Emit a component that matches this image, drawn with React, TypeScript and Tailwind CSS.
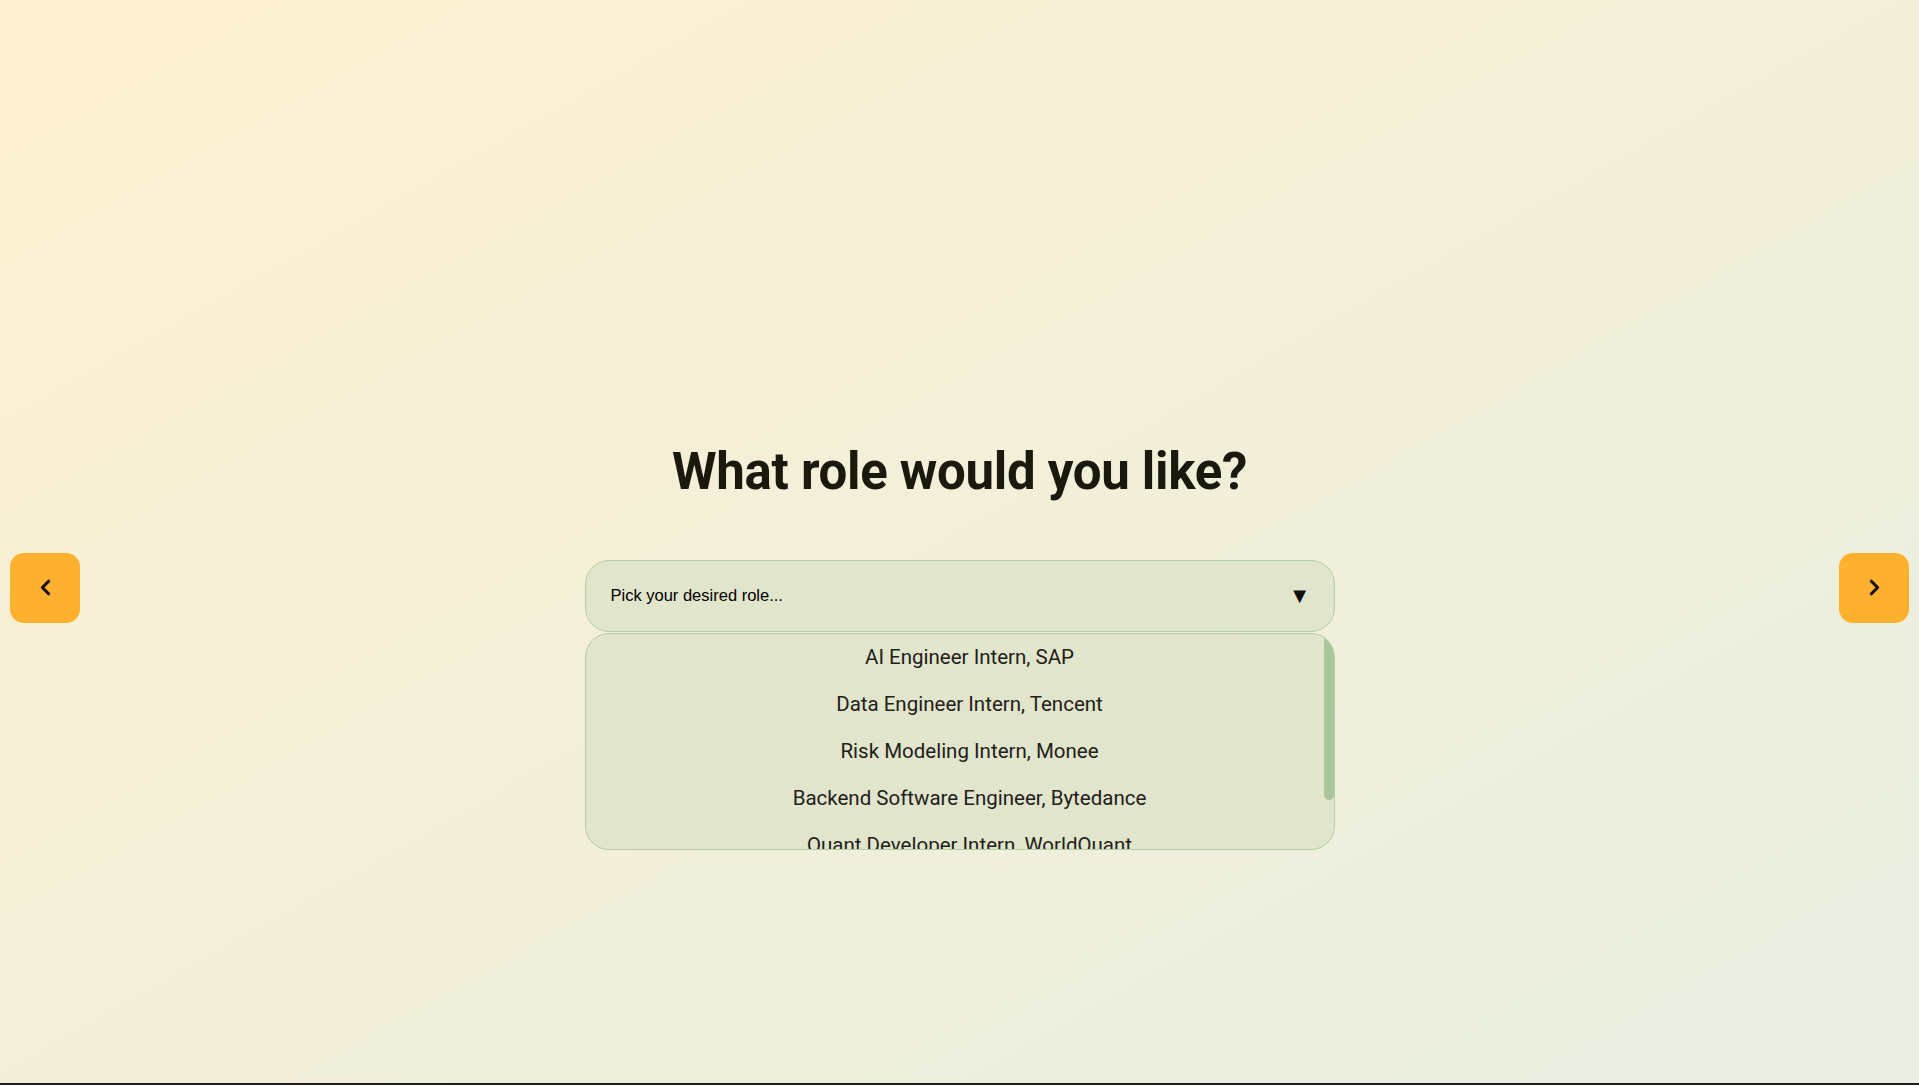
import { ChevronLeft, ChevronRight } from 'lucide-react';

const roles = [
  'AI Engineer Intern, SAP',
  'Data Engineer Intern, Tencent',
  'Risk Modeling Intern, Monee',
  'Backend Software Engineer, Bytedance',
  'Quant Developer Intern, WorldQuant',
  'Machine Learning Intern, Grab',
];

export default function App() {
  return (
    <main className="h-screen border-b-2 border-[#1b1b1b] bg-gradient-to-br from-[#fef0d0] to-[#e7eee1] flex flex-col justify-center gap-[63px] pb-[6px] font-['Roboto',sans-serif]">
      {/* TITLE */}
      <h1 className="text-center text-[51px] leading-none font-bold tracking-[-0.3px] text-[#1b180e]">
        What role would you like?
      </h1>

      {/* ROW: prev button, select, next button */}
      <div className="flex items-start justify-between px-[10px]">
        <button className="-mt-[7px] w-[70px] h-[70px] rounded-[14px] bg-[#fdb12f] flex items-center justify-center text-[#111]">
          <ChevronLeft size={25} strokeWidth={3} />
        </button>

        <div className="relative w-[750px]">
          <div className="h-[72px] rounded-[24px] border border-[#b3cea4] bg-[#e1e5cb] flex items-center justify-between pl-[25px] pr-[23px] font-['Liberation_Sans',Arial,sans-serif]">
            <span className="text-[16.5px] text-black">Pick your desired role...</span>
            <span className="text-[22px] leading-none text-[#111]">▼</span>
          </div>

          {/* DROPDOWN LIST */}
          <div className="absolute left-0 right-0 top-full mt-[1px] h-[217px] rounded-[24px] border border-[#b3cea4] bg-[#e1e5cb] overflow-hidden">
            <ul className="flex flex-col pl-[20px]">
              {roles.map((r) => (
                <li key={r} className="h-[47px] shrink-0 flex items-center justify-center text-[20.5px] text-[#22201a]">
                  {r}
                </li>
              ))}
            </ul>
            <div className="absolute right-0 top-[1px] w-[10px] h-[165px] rounded-full bg-[#a8c69b]" />
          </div>
        </div>

        <button className="-mt-[7px] w-[70px] h-[70px] rounded-[14px] bg-[#fdb12f] flex items-center justify-center text-[#111]">
          <ChevronRight size={25} strokeWidth={3} />
        </button>
      </div>
    </main>
  );
}
